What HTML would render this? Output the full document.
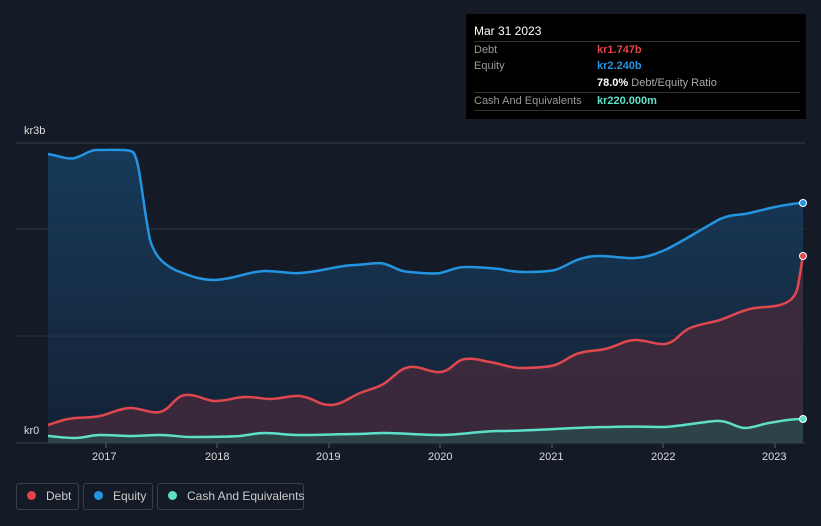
<!DOCTYPE html>
<html><head><meta charset="utf-8"><style>
body{margin:0;width:821px;height:526px;background:#151b26;font-family:"Liberation Sans",sans-serif;overflow:hidden;position:relative}
.tt{position:absolute;left:466px;top:14px;width:340px;height:105px;background:#000;color:#fff;font-size:11px}
.tt .r{position:absolute;left:8px;right:6px;border-top:1px solid #333;height:17px;line-height:17px;color:#999}
.tt span{position:absolute;left:123px}
.lg{position:absolute;top:483px;height:27px;border:1px solid #3a3f4a;border-radius:3px;color:#ccc;font-size:12px;line-height:25px;box-sizing:border-box;white-space:nowrap}
.lg i{display:inline-block;width:9px;height:9px;border-radius:50%;margin:0 10px 0 10px;vertical-align:0px}
.ax{position:absolute;color:#ddd;font-size:11px}
</style></head><body>
<svg width="821" height="526" style="position:absolute;left:0;top:0">
<defs>
<linearGradient id="ge" x1="0" y1="0" x2="0" y2="1"><stop offset="0" stop-color="#173e60"/><stop offset="1" stop-color="#142236"/></linearGradient>
</defs>
<line x1="16" y1="143" x2="805" y2="143" stroke="#3a404c"/>
<path d="M48,154 C60,156 68,160 75,158 C85,155 90,149 100,150 C115,150 128,149 133,152 C140,160 142,200 150,240 C155,255 160,262 175,270 C190,276 200,280 215,280 C235,279 250,271 265,271 C280,271 290,274 300,273 C320,272 340,265 355,265 C370,264 380,262 385,264 C395,267 400,272 410,272 C420,273 435,274 440,273 C450,271 455,267 465,267 C480,267 490,268 500,269 C510,271 515,272 525,272 C540,272 550,271 555,270 C565,267 572,261 580,259 C590,256 595,256 600,256 C615,256 625,259 635,258 C650,257 657,253 665,250 C680,243 700,230 720,219 C730,215 735,215 745,214 C755,212 765,209 775,207 C785,205 795,203 803,203 L803,443 L48,443Z" fill="url(#ge)" opacity=".9"/>
<path d="M48,425 C60,421 65,419 75,418 C85,417 90,418 100,416 C110,414 120,408 130,408 C142,408 150,414 160,412 C170,410 175,396 185,395 C198,394 205,401 215,401 C228,401 235,397 245,397 C258,397 262,399 270,399 C282,399 290,395 300,396 C315,398 318,405 330,405 C342,405 350,397 360,393 C370,389 378,388 385,383 C395,376 400,368 410,367 C422,366 430,373 440,372 C452,371 455,360 465,359 C477,358 482,361 490,362 C502,364 510,368 520,368 C535,368 548,367 555,365 C565,362 570,355 580,353 C590,350 597,351 605,349 C618,346 625,340 635,340 C648,340 655,345 665,344 C677,342 680,332 690,328 C700,324 710,323 720,320 C732,316 740,311 750,309 C762,306 770,308 780,305 C790,302 794,298 797,290 C800,278 801,265 803,256 L803,443 L48,443Z" fill="#3e2a3c" opacity=".9"/>
<path d="M48,436 C60,437 65,438 75,438 C85,438 90,435 100,435 C112,435 120,436 130,436 C140,436 150,435 160,435 C172,435 180,437 190,437 C210,437 225,437 240,436 C250,435 255,433 265,433 C278,433 285,435 300,435 C320,435 340,434 355,434 C365,434 375,433 385,433 C400,433 420,435 440,435 C460,435 480,431 500,431 C520,431 535,430 555,429 C575,428 590,427 610,427 C630,426 645,427 665,427 C680,426 695,423 715,421 C730,420 735,428 745,428 C755,428 763,423 775,422 C785,420 795,419 803,419 L803,443 L48,443Z" fill="#2a4a4c" opacity=".8"/>
<line x1="16" y1="229" x2="805" y2="229" stroke="#2d3440" stroke-width="1"/>
<line x1="16" y1="336" x2="805" y2="336" stroke="#2d3440" stroke-width="1"/>
<path d="M48,154 C60,156 68,160 75,158 C85,155 90,149 100,150 C115,150 128,149 133,152 C140,160 142,200 150,240 C155,255 160,262 175,270 C190,276 200,280 215,280 C235,279 250,271 265,271 C280,271 290,274 300,273 C320,272 340,265 355,265 C370,264 380,262 385,264 C395,267 400,272 410,272 C420,273 435,274 440,273 C450,271 455,267 465,267 C480,267 490,268 500,269 C510,271 515,272 525,272 C540,272 550,271 555,270 C565,267 572,261 580,259 C590,256 595,256 600,256 C615,256 625,259 635,258 C650,257 657,253 665,250 C680,243 700,230 720,219 C730,215 735,215 745,214 C755,212 765,209 775,207 C785,205 795,203 803,203" fill="none" stroke="#2394e0" stroke-width="2.5"/>
<path d="M48,425 C60,421 65,419 75,418 C85,417 90,418 100,416 C110,414 120,408 130,408 C142,408 150,414 160,412 C170,410 175,396 185,395 C198,394 205,401 215,401 C228,401 235,397 245,397 C258,397 262,399 270,399 C282,399 290,395 300,396 C315,398 318,405 330,405 C342,405 350,397 360,393 C370,389 378,388 385,383 C395,376 400,368 410,367 C422,366 430,373 440,372 C452,371 455,360 465,359 C477,358 482,361 490,362 C502,364 510,368 520,368 C535,368 548,367 555,365 C565,362 570,355 580,353 C590,350 597,351 605,349 C618,346 625,340 635,340 C648,340 655,345 665,344 C677,342 680,332 690,328 C700,324 710,323 720,320 C732,316 740,311 750,309 C762,306 770,308 780,305 C790,302 794,298 797,290 C800,278 801,265 803,256" fill="none" stroke="#e0474f" stroke-width="2.5"/>
<path d="M48,436 C60,437 65,438 75,438 C85,438 90,435 100,435 C112,435 120,436 130,436 C140,436 150,435 160,435 C172,435 180,437 190,437 C210,437 225,437 240,436 C250,435 255,433 265,433 C278,433 285,435 300,435 C320,435 340,434 355,434 C365,434 375,433 385,433 C400,433 420,435 440,435 C460,435 480,431 500,431 C520,431 535,430 555,429 C575,428 590,427 610,427 C630,426 645,427 665,427 C680,426 695,423 715,421 C730,420 735,428 745,428 C755,428 763,423 775,422 C785,420 795,419 803,419" fill="none" stroke="#5ee0c8" stroke-width="2.5"/>
<line x1="16" y1="443" x2="805" y2="443" stroke="#3a404c"/>
<g stroke="#555c68"><line x1="106" y1="443" x2="106" y2="448"/><line x1="217" y1="443" x2="217" y2="448"/><line x1="329" y1="443" x2="329" y2="448"/><line x1="440" y1="443" x2="440" y2="448"/><line x1="552" y1="443" x2="552" y2="448"/><line x1="663" y1="443" x2="663" y2="448"/><line x1="775" y1="443" x2="775" y2="448"/></g>
<circle cx="803" cy="203" r="3.5" fill="#2394e0" stroke="#fff" stroke-width="1"/>
<circle cx="803" cy="256" r="3.5" fill="#e0474f" stroke="#fff" stroke-width="1"/>
<circle cx="803" cy="419" r="3.5" fill="#5ee0c8" stroke="#fff" stroke-width="1"/>
</svg>
<div class="ax" style="left:24px;top:125px">kr3b</div>
<div class="ax" style="left:16px;top:424px;background:#151b26;padding:1px 8px">kr0</div>
<div class="ax" style="left:92px;top:451px">2017</div>
<div class="ax" style="left:205px;top:451px">2018</div>
<div class="ax" style="left:316px;top:451px">2019</div>
<div class="ax" style="left:428px;top:451px">2020</div>
<div class="ax" style="left:539px;top:451px">2021</div>
<div class="ax" style="left:651px;top:451px">2022</div>
<div class="ax" style="left:762px;top:451px">2023</div>
<div class="tt">
<div style="position:absolute;left:8px;top:10px;font-size:12px">Mar 31 2023</div>
<div class="r" style="top:27px">Debt<span style="color:#e8424a;font-weight:bold">kr1.747b</span></div>
<div class="r" style="top:44px;border:none">Equity<span style="color:#2394e0;font-weight:bold">kr2.240b</span></div>
<div class="r" style="top:61px;border:none"><span style="color:#fff"><b>78.0%</b> <span style="position:static;color:#aaa">Debt/Equity Ratio</span></span></div>
<div class="r" style="top:78px">Cash And Equivalents<span style="color:#5ee0c8;font-weight:bold">kr220.000m</span></div>
<div class="r" style="top:96px;height:0"></div>
</div>
<div class="lg" style="left:16px;width:63px"><i style="background:#e8424a"></i>Debt</div>
<div class="lg" style="left:83px;width:70px"><i style="background:#2394e0"></i>Equity</div>
<div class="lg" style="left:157px;width:147px"><i style="background:#5ee0c8"></i>Cash And Equivalents</div>
</body></html>
